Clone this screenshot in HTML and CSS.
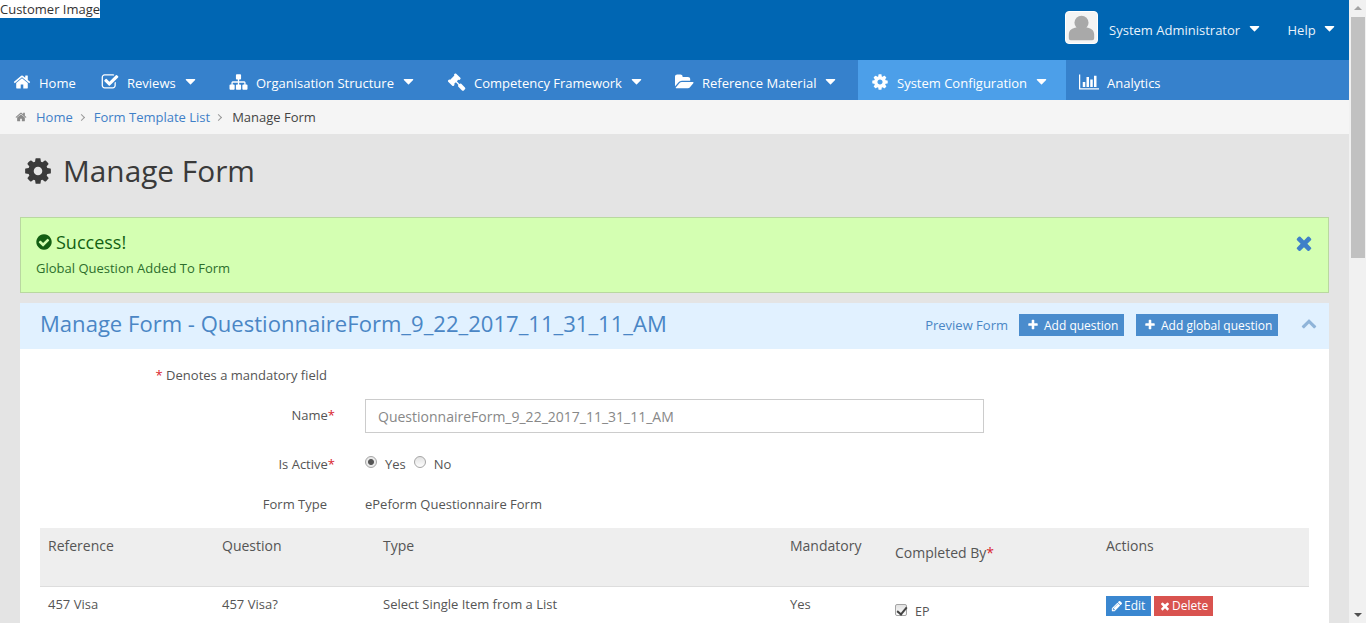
FILE: index.html
```html
<!DOCTYPE html>
<html lang="en">
<head>
<meta charset="utf-8">
<title>Manage Form</title>
<link rel="stylesheet" href="styles.css">
</head>
<body>
<svg class="defs" width="0" height="0" aria-hidden="true">
  <symbol id="i-home" viewBox="0 0 1792 1792"><path d="M1472 992v480q0 26-19 45t-45 19h-384v-384h-256v384h-384q-26 0-45-19t-19-45v-480q0-1 .5-3t.5-3l575-474 575 474q1 2 1 6zm223-69l-62 74q-8 9-21 11h-3q-13 0-21-7l-692-577-692 577q-12 8-24 7-13-2-21-11l-62-74q-8-10-7-23.500t11-21.500l719-599q32-26 76-26t76 26l244 204v-195q0-14 9-23t23-9h192q14 0 23 9t9 23v408l219 182q10 8 11 21.500t-7 23.500z"/></symbol>
  <symbol id="i-gear" viewBox="0 0 1792 1792"><path d="M1152 896q0-106-75-181t-181-75-181 75-75 181 75 181 181 75 181-75 75-181zm512-109v222q0 12-8 23t-20 13l-185 28q-19 54-39 91 35 50 107 138 10 12 10 25t-9 23q-27 37-99 108t-94 71q-12 0-26-9l-138-108q-44 23-91 38-16 136-29 186-7 28-36 28h-222q-14 0-24.500-8.500t-11.500-21.500l-28-184q-49-16-90-37l-141 107q-10 9-25 9-14 0-25-11-126-114-165-168-7-10-7-23 0-12 8-23 15-21 51-66.500t54-70.500q-27-50-41-99l-183-27q-13-2-21-12.500t-8-23.500v-222q0-12 8-23t19-13l186-28q14-46 39-92-40-57-107-138-10-12-10-24 0-10 9-23 26-36 98.500-107.500t94.500-71.500q13 0 26 10l138 107q44-23 91-38 16-136 29-186 7-28 36-28h222q14 0 24.500 8.500t11.500 21.500l28 184q49 16 90 37l142-107q9-9 24-9 13 0 25 10 129 119 165 170 7 8 7 22 0 12-8 23-15 21-51 66.500t-54 70.500q26 50 41 98l183 28q13 2 21 12.500t8 23.500z"/></symbol>
  <symbol id="i-check" viewBox="0 0 1792 1792"><path d="M1472 930v318q0 119-84.500 203.500t-203.500 84.500h-832q-119 0-203.500-84.500t-84.500-203.500v-832q0-119 84.500-203.500t203.500-84.500h832q63 0 117 25 15 7 18 23 3 17-9 29l-49 49q-10 10-23 10-3 0-9-2-23-6-45-6h-832q-66 0-113 47t-47 113v832q0 66 47 113t113 47h832q66 0 113-47t47-113v-254q0-13 9-22l64-64q10-10 23-10 6 0 12 3 20 8 20 29zm231-489l-814 814q-24 24-57 24t-57-24l-430-430q-24-24-24-57t24-57l110-110q24-24 57-24t57 24l263 263 647-647q24-24 57-24t57 24l110 110q24 24 24 57t-24 57z"/></symbol>
  <symbol id="i-sitemap" viewBox="0 0 1792 1792"><path d="M1792 1248v320q0 40-28 68t-68 28h-320q-40 0-68-28t-28-68v-320q0-40 28-68t68-28h96v-192h-512v192h96q40 0 68 28t28 68v320q0 40-28 68t-68 28h-320q-40 0-68-28t-28-68v-320q0-40 28-68t68-28h96v-192h-512v192h96q40 0 68 28t28 68v320q0 40-28 68t-68 28h-320q-40 0-68-28t-28-68v-320q0-40 28-68t68-28h96v-192q0-52 38-90t90-38h512v-192h-96q-40 0-68-28t-28-68v-320q0-40 28-68t68-28h320q40 0 68 28t28 68v320q0 40-28 68t-68 28h-96v192h512q52 0 90 38t38 90v192h96q40 0 68 28t28 68z"/></symbol>
  <symbol id="i-gavel" viewBox="0 0 1792 1792"><path d="M1771 1536q0 53-37 90l-107 108q-39 37-91 37-53 0-90-37l-363-364q-38-36-38-90 0-53 43-96l-256-256-126 126q-14 14-34 14t-34-14q2 2 12.500 12t12.500 13 10 11.500 10 13.500 6 13.500 5.500 16.500 1.500 18q0 38-28 68-3 3-16.500 18t-19 20.500-18.500 16.500-22 15.500-22 9-26 4.500q-40 0-68-28l-408-408q-28-28-28-68 0-13 4.500-26t9-22 15.500-22 16.500-18.500 20.500-19 18-16.500q30-28 68-28 10 0 18 1.500t16.500 5.500 13.500 6 13.500 10 11.500 10 13 12.500 12 12.500q-14-14-14-34t14-34l348-348q14-14 34-14t34 14q-2-2-12.500-12t-12.500-13-10-11.500-10-13.500-6-13.500-5.500-16.500-1.500-18q0-38 28-68 3-3 16.500-18t19-20.500 18.500-16.500 22-15.500 22-9 26-4.500q40 0 68 28l408 408q28 28 28 68 0 13-4.500 26t-9 22-15.500 22-16.500 18.500-20.500 19-18 16.500q-30 28-68 28-10 0-18-1.500t-16.500-5.500-13.500-6-13.500-10-11.500-10-13-12.500-12-12.500q14 14 14 34t-14 34l-126 126 256 256q43-43 96-43 52 0 91 37l363 363q37 39 37 91z"/></symbol>
  <symbol id="i-folder" viewBox="0 0 1920 1792"><path d="M1879 952q0 31-31 66l-336 396q-43 51-120.500 86.500t-143.500 35.500h-1088q-34 0-60.500-13t-26.500-43q0-31 31-66l336-396q43-51 120.500-86.500t143.500-35.500h1088q34 0 60.500 13t26.500 43zm-343-344v160h-832q-94 0-197 47.500t-164 119.500l-337 396-5 6q0-4-.5-12.500t-.500-12.500v-960q0-92 66-158t158-66h320q92 0 158 66t66 158v32h544q92 0 158 66t66 158z"/></symbol>
  <symbol id="i-bars" viewBox="0 0 2048 1792"><path d="M640 896v512h-256v-512h256zm384-512v1024h-256v-1024h256zm1024 1152v128h-2048v-1536h128v1408h1920zm-640-896v768h-256v-768h256zm384-384v1152h-256v-1152h256z"/></symbol>
  <symbol id="i-caret" viewBox="320 640 1152 640"><path d="M1408 704q0 26-19 45l-448 448q-19 19-45 19t-45-19l-448-448q-19-19-19-45t19-45 45-19h896q26 0 45 19t19 45z"/></symbol>
  <symbol id="i-circle-check" viewBox="0 0 1792 1792"><path d="M1412 734q0-28-18-46l-91-90q-19-19-45-19t-45 19l-408 407-226-226q-19-19-45-19t-45 19l-91 90q-18 18-18 46 0 27 18 45l362 362q19 19 45 19 27 0 46-19l543-543q18-18 18-45zm252 162q0 209-103 385.500t-279.500 279.500-385.500 103-385.500-103-279.500-279.500-103-385.500 103-385.500 279.500-279.500 385.500-103 385.500 103 279.500 279.500 103 385.500z"/></symbol>
  <symbol id="i-times" viewBox="0 0 1792 1792"><path d="M1490 1322q0 40-28 68l-136 136q-28 28-68 28t-68-28l-294-294-294 294q-28 28-68 28t-68-28l-136-136q-28-28-28-68t28-68l294-294-294-294q-28-28-28-68t28-68l136-136q28-28 68-28t68 28l294 294 294-294q28-28 68-28t68 28l136 136q28 28 28 68t-28 68l-294 294 294 294q28 28 28 68z"/></symbol>
  <symbol id="i-plus" viewBox="0 0 1792 1792"><path d="M1600 736v192q0 40-28 68t-68 28h-416v416q0 40-28 68t-68 28h-192q-40 0-68-28t-28-68v-416h-416q-40 0-68-28t-28-68v-192q0-40 28-68t68-28h416v-416q0-40 28-68t68-28h192q40 0 68 28t28 68v416h416q40 0 68 28t28 68z"/></symbol>
  <symbol id="i-up" viewBox="0 0 1792 1792"><path d="M1683 1331l-166 165q-19 19-45 19t-45-19l-531-531-531 531q-19 19-45 19t-45-19l-166-165q-19-19-19-45.500t19-45.500l742-741q19-19 45-19t45 19l742 741q19 19 19 45.500t-19 45.500z"/></symbol>
  <symbol id="i-pencil" viewBox="0 0 1792 1792"><path d="M491 1536l91-91-235-235-91 91v107h128v128h107zm523-928q0-22-22-22-10 0-17 7l-542 542q-7 7-7 17 0 22 22 22 10 0 17-7l542-542q7-7 7-17zm-54-192l416 416-832 832h-416v-416zm683 96q0 53-37 90l-166 166-416-416 166-165q36-38 90-38 53 0 91 38l235 234q37 39 37 91z"/></symbol>
</svg>

<div class="window">
  <div class="page">
    <header class="topbar">
      <span class="logo-alt">Customer Image</span>
      <div class="user-area">
        <span class="avatar">
          <svg viewBox="0 0 33 33"><circle cx="16.500" cy="11.500" r="7.500"/><path d="M3 28v-4c0-5 4-7 8-7.500 3 2 8 2 11 0 4 .5 8 2.500 8 7.500v4q0 2-2 2H5q-2 0-2-2z"/></svg>
        </span>
        <a class="user-link user-name">System Administrator <svg class="caret"><use href="#i-caret"/></svg></a>
        <a class="user-link user-help">Help <svg class="caret"><use href="#i-caret"/></svg></a>
      </div>
    </header>

    <nav class="mainnav">
      <a class="nav-item nav-home"><svg class="nav-icon"><use href="#i-home"/></svg>Home</a>
      <a class="nav-item nav-reviews"><svg class="nav-icon"><use href="#i-check"/></svg>Reviews<svg class="caret"><use href="#i-caret"/></svg></a>
      <a class="nav-item nav-org"><svg class="nav-icon"><use href="#i-sitemap"/></svg>Organisation Structure<svg class="caret"><use href="#i-caret"/></svg></a>
      <a class="nav-item nav-comp"><svg class="nav-icon"><use href="#i-gavel"/></svg>Competency Framework<svg class="caret"><use href="#i-caret"/></svg></a>
      <a class="nav-item nav-ref"><svg class="nav-icon"><use href="#i-folder"/></svg>Reference Material<svg class="caret"><use href="#i-caret"/></svg></a>
      <a class="nav-item nav-sys is-active"><svg class="nav-icon"><use href="#i-gear"/></svg>System Configuration<svg class="caret"><use href="#i-caret"/></svg></a>
      <a class="nav-item nav-ana"><svg class="nav-icon"><use href="#i-bars"/></svg>Analytics</a>
    </nav>

    <div class="crumbs">
      <svg class="crumb-home"><use href="#i-home"/></svg>
      <a class="crumb-link">Home</a>
      <span class="crumb-sep"></span>
      <a class="crumb-link">Form Template List</a>
      <span class="crumb-sep"></span>
      <span class="crumb-current">Manage Form</span>
    </div>

    <main class="content">
      <h1 class="page-title"><svg class="title-icon"><use href="#i-gear"/></svg>Manage Form</h1>

      <section class="alert">
        <div class="alert-body">
          <h4 class="alert-title"><svg class="alert-icon"><use href="#i-circle-check"/></svg>Success!</h4>
          <p class="alert-text">Global Question Added To Form</p>
        </div>
        <svg class="alert-close"><use href="#i-times"/></svg>
      </section>

      <section class="panel">
        <div class="panel-head">
          <h2 class="panel-title">Manage Form - QuestionnaireForm_9_22_2017_11_31_11_AM</h2>
          <a class="preview-link">Preview Form</a>
          <a class="head-btn btn-add"><svg class="btn-icon"><use href="#i-plus"/></svg>Add question</a>
          <a class="head-btn btn-global"><svg class="btn-icon"><use href="#i-plus"/></svg>Add global question</a>
          <svg class="collapse-icon"><use href="#i-up"/></svg>
        </div>

        <div class="panel-body">
          <div class="form-grid">
            <div class="label plain mand-note"><span class="req">*</span> Denotes a mandatory field</div>
            <div></div>
            <div class="label name-label">Name<span class="req">*</span></div>
            <input class="text-input" type="text" value="QuestionnaireForm_9_22_2017_11_31_11_AM">
            <div class="label active-label">Is Active<span class="req">*</span></div>
            <div class="radios">
              <input class="radio" type="radio" name="active" checked><span class="radio-text">Yes</span>
              <input class="radio" type="radio" name="active"><span class="radio-text">No</span>
            </div>
            <div class="label plain type-label">Form Type</div>
            <div class="type-value">ePeform Questionnaire Form</div>
          </div>

          <table class="questions">
            <colgroup>
              <col class="c1"><col class="c2"><col class="c3"><col class="c4"><col class="c5"><col class="c6">
            </colgroup>
            <thead>
              <tr>
                <th>Reference</th>
                <th>Question</th>
                <th>Type</th>
                <th>Mandatory</th>
                <th class="th-completed">Completed By<span class="req">*</span></th>
                <th>Actions</th>
              </tr>
            </thead>
            <tbody>
              <tr>
                <td>457 Visa</td>
                <td>457 Visa?</td>
                <td>Select Single Item from a List</td>
                <td>Yes</td>
                <td class="td-completed"><input class="check" type="checkbox" checked><span class="check-text">EP</span></td>
                <td class="td-actions">
                  <a class="row-btn btn-edit"><svg class="row-icon"><use href="#i-pencil"/></svg>Edit</a>
                  <a class="row-btn btn-delete"><svg class="row-icon"><use href="#i-times"/></svg>Delete</a>
                </td>
              </tr>
            </tbody>
          </table>
        </div>
      </section>
    </main>
  </div>

  <div class="scrollbar">
    <span class="sb-arrow sb-up"></span>
    <span class="sb-thumb"></span>
    <span class="sb-arrow sb-down"></span>
  </div>
</div>
</body>
</html>
```

FILE: styles.css
```css
* { box-sizing: border-box; }
html, body { margin: 0; height: 100%; overflow: hidden; }
body { font-family: "Open Sans", "Liberation Sans", sans-serif; font-size: 13px; color: #4a4a4a; background: #e4e4e4; }
a { text-decoration: none; cursor: pointer; }
.defs { position: absolute; }
svg { fill: currentColor; flex: none; }

.window { display: flex; height: 623px; }
.page { width: 1349px; flex: none; overflow: hidden; }

/* top bar */
.topbar { height: 60px; background: #0066b3; display: flex; align-items: flex-start; }
.logo-alt { background: #fff; color: #333; font-size: 13px; line-height: 18px; height: 18px; }
.user-area { margin-left: auto; display: flex; align-items: center; height: 60px; color: #e8f2fb; }
.avatar { width: 33px; height: 33px; margin-top: -5px; background: #f4f4f4; border: 1px solid #fff; border-radius: 4px; display: block; }
.avatar svg { width: 31px; height: 31px; fill: #a9a9a9; display: block; }
.user-link { font-size: 13px; color: #e8f2fb; display: flex; align-items: center; white-space: pre; margin-top: -1px; }
.user-name { margin-left: 11px; }
.user-help { margin-left: 28px; margin-right: 14px; }
.user-link .caret { margin-left: 5px; margin-top: -1px; }
.caret { width: 11px; height: 6px; fill: #fff; }

/* main nav */
.mainnav { height: 40px; background: #3681cc; display: flex; }
.nav-item { display: flex; align-items: center; height: 40px; padding: 6px 0 0 13px; color: #fff; font-size: 13px; }
.nav-item .caret { margin-left: 9px; margin-top: -2px; }
.nav-icon { width: 18px; height: 18px; margin-right: 8px; margin-top: -3px; }
.nav-org .nav-icon, .nav-comp .nav-icon, .nav-ref .nav-icon { width: 19px; }
.nav-ana .nav-icon { width: 20px; }
.nav-home { width: 88px; }
.nav-reviews { width: 128px; }
.nav-org { width: 218px; }
.nav-comp { width: 228px; }
.nav-ref { width: 196px; }
.nav-sys { width: 208px; }
.nav-ana { flex: 1; }
.is-active { background: #4c9fe9; }

/* breadcrumb */
.crumbs { height: 34px; background: #f5f5f5; display: flex; align-items: center; padding-left: 15px; font-size: 13px; }
.crumb-home { width: 12px; height: 12px; color: #8a8a8a; margin-right: 9px; }
.crumb-link { color: #3f80c8; }
.crumb-current { color: #444; margin-left: 1px; }
.crumb-sep { width: 5px; height: 5px; margin: 0 10px 0 6px; border-top: 1px solid #999; border-right: 1px solid #999; transform: rotate(45deg); }

/* content */
.content { padding: 0 20px; }
.page-title { margin: 0; height: 83px; display: flex; align-items: center; font-size: 29.800px; font-weight: 400; color: #3a3a3a; padding: 0 0 10px 3px; }
.title-icon { width: 30px; height: 30px; margin-right: 10px; }

.alert { height: 76px; background: #d4ffb2; border: 1px solid #b9d8a0; display: flex; justify-content: space-between; color: #1d6a1d; padding: 0 15px; }
.alert-title { margin: 12px 0 0; display: flex; align-items: center; font-size: 18px; font-weight: 400; line-height: 24px; color: #135f13; }
.alert-icon { width: 18px; height: 18px; margin-right: 3px; margin-left: -1px; }
.alert-text { margin: 5px 0 0; font-size: 13px; line-height: 18px; color: #2c6e2c; }
.alert-close { width: 22px; height: 22px; margin-top: 14px; margin-right: -2px; color: #3f80c8; }

.panel { margin-top: 10px; background: #fff; height: 400px; }
.panel-head { height: 46px; background: #e1f1ff; display: flex; align-items: center; padding: 0 10px 2px 20px; }
.panel-title { margin: 0 0 5px; flex: 1; font-size: 22.070px; font-weight: 400; color: #4a86c5; white-space: nowrap; }
.preview-link { color: #4a86c5; font-size: 13px; margin-right: 11px; }
.head-btn { display: flex; align-items: center; height: 22px; background: #4a8ccd; color: #fff; font-size: 12px; padding: 0 0 0 8px; white-space: nowrap; }
.btn-add { width: 105px; }
.btn-global { width: 142px; margin-left: 12px; }
.btn-icon { width: 12px; height: 12px; margin-right: 5px; }
.collapse-icon { width: 16px; height: 16px; color: #8fb4d9; margin-left: 23px; margin-top: -4px; margin-right: 2px; }

.panel-body { padding: 0 20px; }
.form-grid { display: grid; grid-template-columns: 295px 619px; column-gap: 30px; align-items: center; padding-top: 17px; }
.label { text-align: right; font-size: 13px; color: #555; line-height: 18px; }
.label.plain { padding-right: 8px; }
.req { color: #d9232d; }
.name-label { margin-top: 13px; }
.text-input { height: 34px; margin-top: 15px; border: 1px solid #ccc; background: #fff; padding: 0 12px; font: 14px "Open Sans", "Liberation Sans", sans-serif; color: #888; outline: none; width: 619px; }
.active-label { margin-top: 22px; }
.radios { margin-top: 22px; display: flex; align-items: center; height: 18px; color: #555; }
.radio { appearance: none; width: 12px; height: 12px; margin: -5px 8px 0 0; border-radius: 50%; border: 1px solid #a5a5a5; background: linear-gradient(#e2e2e2, #fdfdfd); }
.radio:checked { background: radial-gradient(circle, #555 0 2.500px, #e9e9e9 3.500px); }
.radio-text { margin-right: 8px; }
.type-label, .type-value { margin-top: 22px; line-height: 18px; }
.type-value { color: #555; }

.questions { margin-top: 15px; width: 1269px; border-collapse: collapse; table-layout: fixed; color: #555; }
.c1 { width: 174px; }
.c2 { width: 161px; }
.c3 { width: 407px; }
.c4 { width: 105px; }
.c5 { width: 211px; }
.c6 { width: 211px; }
.questions th { background: #eee; height: 58px; padding: 8px 8px 0; vertical-align: top; font-weight: 400; font-size: 14px; line-height: 20px; text-align: left; border-bottom: 1px solid #ddd; color: #555; }
.questions th.th-completed { padding-top: 15px; }
.questions td { padding: 7px 8px 0; height: 60px; vertical-align: top; line-height: 20px; font-size: 13px; }
.td-completed { white-space: nowrap; }
.check { appearance: none; width: 12px; height: 12px; margin: 10px 8px 0 0; border: 1px solid #a5a5a5; border-radius: 2px; background: linear-gradient(#e2e2e2, #fdfdfd); position: relative; vertical-align: top; }
.check:checked::before { content: ""; position: absolute; left: 3px; top: 0; width: 4px; height: 8px; border: solid #444; border-width: 0 2px 2px 0; transform: rotate(40deg); }
.check-text { display: inline-block; margin-top: 8px; font-size: 12.500px; }
.questions td.td-actions { white-space: nowrap; font-size: 0; }
.row-btn { display: inline-flex; align-items: center; height: 20px; margin-top: 2px; color: #fff; font-size: 12px; padding: 0 0 0 5px; vertical-align: top; }
.btn-edit { background: #3a87d0; width: 45px; margin-right: 3px; }
.btn-delete { background: #d9534f; width: 59px; }
.row-icon { width: 12px; height: 12px; margin-right: 1px; }

/* scrollbar */
.scrollbar { width: 17px; flex: none; background: #f1f1f1; display: flex; flex-direction: column; align-items: center; position: relative; }
.sb-arrow { width: 0; height: 0; border-left: 4px solid transparent; border-right: 4px solid transparent; }
.sb-up { margin-top: 6px; border-bottom: 4px solid #a3a3a3; }
.sb-thumb { width: 14px; height: 241px; margin-top: 7px; background: #c1c1c1; }
.sb-down { margin-top: auto; margin-bottom: 6px; border-top: 4px solid #505050; }
```
